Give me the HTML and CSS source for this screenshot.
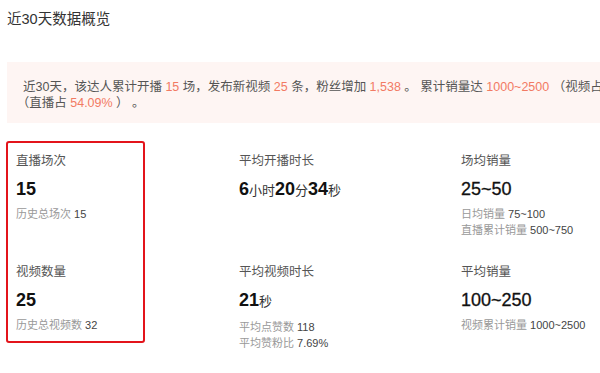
FILE: index.html
```html
<!DOCTYPE html>
<html lang="zh-CN">
<head>
<meta charset="utf-8">
<title>近30天数据概览</title>
<link rel="stylesheet" href="styles.css">
</head>
<body>
<div class="page">
  <h2 class="title">近30天数据概览</h2>
  <div class="summary">
    近30天，该达人累计开播 <span class="hl">15</span> 场，发布新视频 <span class="hl">25</span> 条，粉丝增加 <span class="hl">1,538</span> 。 累计销量达 <span class="hl">1000~2500</span> <span class="nw">（视频占 <span class="hl">45.91%</span> ）</span><span class="nw">（直播占 <span class="hl">54.09%</span> ） 。</span>
  </div>
  <div class="stats">
    <div class="mark"></div>
    <div class="cell">
      <div class="label">直播场次</div>
      <div class="value">15</div>
      <div class="sub">历史总场次 <span class="num">15</span></div>
    </div>
    <div class="cell">
      <div class="label">平均开播时长</div>
      <div class="value">6<span class="unit">小时</span>20<span class="unit">分</span>34<span class="unit">秒</span></div>
    </div>
    <div class="cell">
      <div class="label">场均销量</div>
      <div class="value light">25~50</div>
      <div class="sub">日均销量 <span class="num">75~100</span></div>
      <div class="sub">直播累计销量 <span class="num">500~750</span></div>
    </div>
    <div class="cell">
      <div class="label">视频数量</div>
      <div class="value">25</div>
      <div class="sub">历史总视频数 <span class="num">32</span></div>
    </div>
    <div class="cell">
      <div class="label">平均视频时长</div>
      <div class="value">21<span class="unit">秒</span></div>
      <div class="sub">平均点赞数 <span class="num">118</span></div>
      <div class="sub">平均赞粉比 <span class="num">7.69%</span></div>
    </div>
    <div class="cell">
      <div class="label">平均销量</div>
      <div class="value light">100~250</div>
      <div class="sub">视频累计销量 <span class="num">1000~2500</span></div>
    </div>
  </div>
</div>
</body>
</html>
```

FILE: styles.css
```css
html, body {
  margin: 0;
  padding: 0;
  background: #fff;
  overflow: hidden;
}
body {
  font-family: "Liberation Sans", "Noto Sans CJK SC", sans-serif;
  color: #333;
}
.page {
  width: 600px;
  height: 373px;
  overflow: hidden;
}
.title {
  margin: 0;
  padding: 10px 0 0 7px;
  font-size: 14.5px;
  line-height: 18px;
  font-weight: normal;
  color: #333;
}
.summary {
  margin: 34px 0 0 7px;
  width: 720px;
  box-sizing: border-box;
  padding: 17px 16px 12px 16px;
  background: #fef5f3;
  font-size: 12.5px;
  line-height: 16px;
  color: #555;
}
.nw {
  white-space: nowrap;
}
.hl {
  color: #f27a63;
}
.stats {
  position: relative;
  margin-top: 29px;
  padding-left: 16px;
  display: grid;
  grid-template-columns: 223px 222px 1fr;
  grid-auto-rows: 111px;
}
.mark {
  position: absolute;
  left: 6px;
  top: -11px;
  width: 139px;
  height: 202px;
  box-sizing: border-box;
  border: 2px solid #e3141b;
  border-radius: 3px;
  pointer-events: none;
}
.label {
  font-size: 12.5px;
  line-height: 18px;
  color: #555;
}
.value {
  margin-top: 7px;
  font-size: 18px;
  line-height: 24px;
  font-weight: bold;
  color: #111;
}
.value.light {
  font-weight: normal;
  -webkit-text-stroke: 0.3px #111;
}
.unit {
  font-size: 13px;
  font-weight: normal;
  color: #333;
}
.value + .sub {
  margin-top: 5px;
}
.sub {
  font-size: 11px;
  line-height: 16px;
  color: #999;
}
.num {
  color: #444;
}
```
